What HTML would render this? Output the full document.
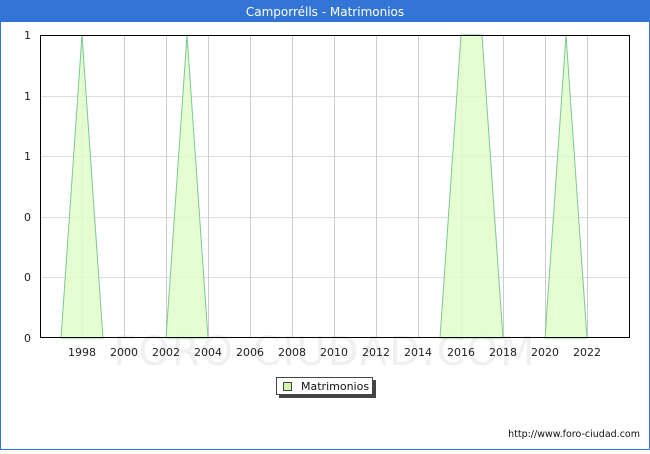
<!DOCTYPE html><html><head><style>
body{margin:0;width:650px;height:450px;overflow:hidden;background:#fff;font-family:"DejaVu Sans","Liberation Sans",sans-serif}
</style></head><body>
<svg width="650" height="450" xmlns="http://www.w3.org/2000/svg" font-family="DejaVu Sans, Liberation Sans, sans-serif">
<rect x="0.5" y="0.5" width="649" height="449" fill="#fff" stroke="#3375d6"/>
<rect x="0" y="0" width="650" height="22" fill="#3375d6"/>
<text x="325" y="16" fill="#fff" font-size="12" text-anchor="middle">Camporrélls - Matrimonios</text>
<text x="325" y="365" fill="#f0f0f0" font-size="40" text-anchor="middle" letter-spacing="2">FORO-CIUDAD.COM</text>
<g stroke="#ddd" stroke-width="1">
<line x1="40" y1="96.5" x2="630" y2="96.5"/><line x1="40" y1="156.5" x2="630" y2="156.5"/><line x1="40" y1="217.5" x2="630" y2="217.5"/><line x1="40" y1="277.5" x2="630" y2="277.5"/>
</g>
<g stroke="#ccc" stroke-width="1">
<line x1="82.5" y1="35" x2="82.5" y2="338"/><line x1="124.5" y1="35" x2="124.5" y2="338"/><line x1="166.5" y1="35" x2="166.5" y2="338"/><line x1="208.5" y1="35" x2="208.5" y2="338"/><line x1="250.5" y1="35" x2="250.5" y2="338"/><line x1="292.5" y1="35" x2="292.5" y2="338"/><line x1="334.5" y1="35" x2="334.5" y2="338"/><line x1="376.5" y1="35" x2="376.5" y2="338"/><line x1="418.5" y1="35" x2="418.5" y2="338"/><line x1="461.5" y1="35" x2="461.5" y2="338"/><line x1="503.5" y1="35" x2="503.5" y2="338"/><line x1="545.5" y1="35" x2="545.5" y2="338"/><line x1="587.5" y1="35" x2="587.5" y2="338"/>
</g>
<g fill="#e0fdc8" fill-opacity="0.85" stroke="#7cc896" stroke-width="1">
<polygon points="61,338 82,35 103,338"/>
<polygon points="166,338 187,35 208,338"/>
<polygon points="440,338 461,35 482,35 503,338"/>
<polygon points="545,338 566,35 587,338"/>
</g>
<rect x="40.5" y="35.5" width="589" height="302" fill="none" stroke="#000"/>
<g font-size="11" fill="#222" text-anchor="end">
<text x="31" y="39">1</text><text x="31" y="100">1</text><text x="31" y="160">1</text><text x="31" y="221">0</text><text x="31" y="281">0</text><text x="31" y="342">0</text>
</g>
<g font-size="11" fill="#222" text-anchor="middle">
<text x="82" y="356">1998</text><text x="124" y="356">2000</text><text x="166" y="356">2002</text><text x="208" y="356">2004</text><text x="250" y="356">2006</text><text x="292" y="356">2008</text><text x="334" y="356">2010</text><text x="376" y="356">2012</text><text x="418" y="356">2014</text><text x="461" y="356">2016</text><text x="503" y="356">2018</text><text x="545" y="356">2020</text><text x="587" y="356">2022</text>
</g>
<rect x="279" y="380" width="97" height="18" fill="#444"/>
<rect x="276.5" y="377.5" width="96" height="17" fill="#fff" stroke="#444"/>
<rect x="283.5" y="382.5" width="8" height="8" fill="#ccf8a8" stroke="#444"/>
<text x="301" y="390" font-size="11" fill="#111">Matrimonios</text>
<text x="640" y="437" font-size="9.5" fill="#111" text-anchor="end">http://www.foro-ciudad.com</text>
</svg>
</body></html>
